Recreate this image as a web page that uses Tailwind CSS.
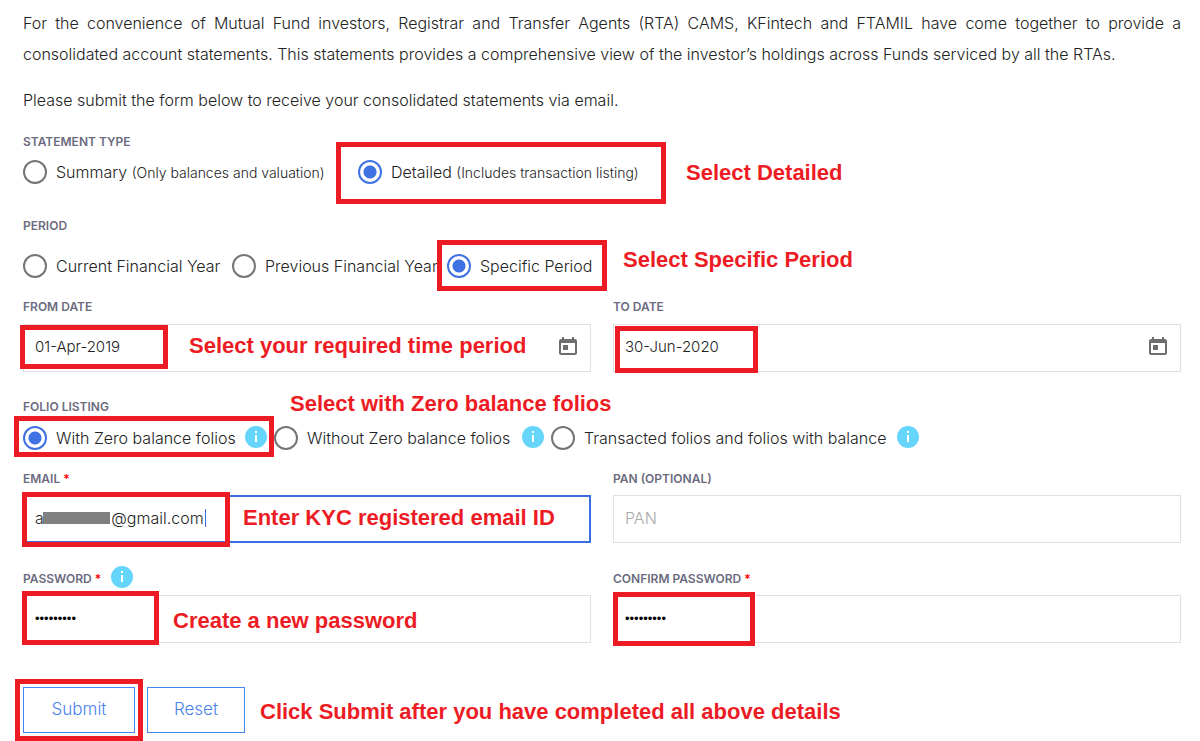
<!DOCTYPE html>
<html lang="en">
<head>
  <meta charset="UTF-8">
  <meta name="viewport" content="width=device-width, initial-scale=1.0">
  <title>Consolidated Account Statement</title>
  <script src="https://cdn.jsdelivr.net/npm/@tailwindcss/browser@4"></script>
</head>
<body class="bg-white font-['Inter',sans-serif] text-base font-light text-[#222222]">
  <main class="pt-2 pr-[19px] pb-2 pl-[23px]">
    <p class="mb-[15px] text-justify leading-[31px]">For the convenience of Mutual Fund investors, Registrar and Transfer Agents (RTA) CAMS, KFintech and FTAMIL have come together to provide a consolidated account statements. This statements provides a comprehensive view of the investor’s holdings across Funds serviced by all the RTAs.</p>
    <p class="mb-[18px] leading-[31px]">Please submit the form below to receive your consolidated statements via email.</p>

    <form>
      <!-- Statement type -->
      <fieldset>
        <legend class="mb-[10px] text-xs leading-4 font-semibold text-[#6b6b80]">STATEMENT TYPE</legend>
        <div class="flex">
          <label class="flex h-6 w-[335px] items-center gap-[9px] whitespace-nowrap">
            <input type="radio" name="type" class="size-6 shrink-0 appearance-none rounded-full border-2 border-[#757575] checked:border-[#3f73e3] checked:bg-[radial-gradient(circle,#3f73e3_6px,transparent_7px)]">
            <span>Summary <span class="text-sm">(Only balances and valuation)</span></span>
          </label>
          <label class="relative flex h-6 items-center gap-[9px] whitespace-nowrap">
            <input type="radio" name="type" checked class="size-6 shrink-0 appearance-none rounded-full border-2 border-[#757575] checked:border-[#3f73e3] checked:bg-[radial-gradient(circle,#3f73e3_6px,transparent_7px)]">
            <span>Detailed <span class="text-sm">(Includes transaction listing)</span></span>
            <span class="absolute -top-[18px] -left-[22px] h-[62px] w-[330px] border-5 border-[#ed1c24]"></span>
            <strong class="absolute top-px left-[328px] font-['Liberation_Sans',sans-serif] text-[22px] leading-6 font-bold text-[#ed1c24]">Select Detailed</strong>
          </label>
        </div>
      </fieldset>

      <!-- Period -->
      <fieldset class="mt-[34px]">
        <legend class="mb-5 text-xs leading-4 font-semibold text-[#6b6b80]">PERIOD</legend>
        <div class="flex">
          <label class="flex h-6 w-[209px] items-center gap-[9px] whitespace-nowrap">
            <input type="radio" name="period" class="size-6 shrink-0 appearance-none rounded-full border-2 border-[#757575] checked:border-[#3f73e3] checked:bg-[radial-gradient(circle,#3f73e3_6px,transparent_7px)]">
            Current Financial Year
          </label>
          <label class="flex h-6 w-[215px] items-center gap-[9px] whitespace-nowrap">
            <input type="radio" name="period" class="size-6 shrink-0 appearance-none rounded-full border-2 border-[#757575] checked:border-[#3f73e3] checked:bg-[radial-gradient(circle,#3f73e3_6px,transparent_7px)]">
            Previous Financial Year
          </label>
          <label class="relative flex h-6 items-center gap-[9px] whitespace-nowrap">
            <input type="radio" name="period" checked class="size-6 shrink-0 appearance-none rounded-full border-2 border-[#757575] checked:border-[#3f73e3] checked:bg-[radial-gradient(circle,#3f73e3_6px,transparent_7px)]">
            Specific Period
            <span class="absolute -top-[14px] -left-[10px] h-[51px] w-[170px] border-5 border-[#ed1c24]"></span>
            <strong class="absolute -top-[6px] left-[176px] font-['Liberation_Sans',sans-serif] text-[22px] leading-6 font-bold text-[#ed1c24]">Select Specific Period</strong>
          </label>
        </div>
      </fieldset>

      <!-- Dates -->
      <div class="mt-[21px] grid grid-cols-2 gap-x-[22px]">
        <div>
          <label for="from" class="mb-[9px] block text-xs leading-4 font-semibold text-[#6b6b80]">FROM DATE</label>
          <div class="relative flex h-12 items-center border border-[#e0e0e0]">
            <input type="text" id="from" value="01-Apr-2019" class="min-w-0 flex-1 pb-[2px] pl-[11px] text-[15px] leading-5 outline-none">
            <button type="button" aria-label="Pick from date" class="mr-3 mb-1">
              <svg class="size-5" viewBox="0 0 20 20" fill="#6e6e6e"><path fill-rule="evenodd" d="M4 1h2v2h8V1h2v2h1a2 2 0 0 1 2 2v12a2 2 0 0 1-2 2H3a2 2 0 0 1-2-2V5a2 2 0 0 1 2-2h1zM3 7v10h14V7z"/><path d="M5 9h5v5H5z"/></svg>
            </button>
            <span class="pointer-events-none absolute top-0 -left-1 h-11 w-[148px] border-5 border-[#ed1c24]"></span>
            <strong class="pointer-events-none absolute top-[9px] left-[165px] font-['Liberation_Sans',sans-serif] text-[22px] leading-6 font-bold text-[#ed1c24]">Select your required time period</strong>
          </div>
        </div>
        <div>
          <label for="to" class="mb-[9px] block text-xs leading-4 font-semibold text-[#6b6b80]">TO DATE</label>
          <div class="relative flex h-12 items-center border border-[#e0e0e0]">
            <input type="text" id="to" value="30-Jun-2020" class="min-w-0 flex-1 pb-[2px] pl-[11px] text-[15px] leading-5 outline-none">
            <button type="button" aria-label="Pick to date" class="mr-3 mb-1">
              <svg class="size-5" viewBox="0 0 20 20" fill="#6e6e6e"><path fill-rule="evenodd" d="M4 1h2v2h8V1h2v2h1a2 2 0 0 1 2 2v12a2 2 0 0 1-2 2H3a2 2 0 0 1-2-2V5a2 2 0 0 1 2-2h1zM3 7v10h14V7z"/><path d="M5 9h5v5H5z"/></svg>
            </button>
            <span class="pointer-events-none absolute top-px left-px h-[47px] w-[143px] border-5 border-[#ed1c24]"></span>
          </div>
        </div>
      </div>

      <!-- Folio listing -->
      <fieldset class="mt-[27px]">
        <legend class="mb-[11px] text-xs leading-4 font-semibold text-[#6b6b80]">FOLIO LISTING</legend>
        <div class="relative flex">
          <strong class="absolute -top-[34px] left-[267px] font-['Liberation_Sans',sans-serif] text-[22px] leading-6 font-bold text-[#ed1c24]">Select with Zero balance folios</strong>
          <label class="relative flex h-6 w-[251px] items-center gap-[9px] whitespace-nowrap">
            <input type="radio" name="folio" checked class="size-6 shrink-0 appearance-none rounded-full border-2 border-[#757575] checked:border-[#3f73e3] checked:bg-[radial-gradient(circle,#3f73e3_6px,transparent_7px)]">
            <span class="w-[180px]">With Zero balance folios</span>
            <svg class="mb-[2px] size-[22px] shrink-0" viewBox="0 0 22 22"><circle cx="11" cy="11" r="11" fill="#66d5fb"/><path d="M10 5h2v2h-2zM10 9h2v7h-2z" fill="#fff"/></svg>
            <span class="absolute -top-[10px] -left-[9px] h-[41px] w-[260px] border-5 border-[#ed1c24]"></span>
          </label>
          <label class="flex h-6 w-[277px] items-center gap-[9px] whitespace-nowrap">
            <input type="radio" name="folio" class="size-6 shrink-0 appearance-none rounded-full border-2 border-[#757575] checked:border-[#3f73e3] checked:bg-[radial-gradient(circle,#3f73e3_6px,transparent_7px)]">
            <span class="w-[206px]">Without Zero balance folios</span>
            <svg class="mb-[2px] size-[22px] shrink-0" viewBox="0 0 22 22"><circle cx="11" cy="11" r="11" fill="#66d5fb"/><path d="M10 5h2v2h-2zM10 9h2v7h-2z" fill="#fff"/></svg>
          </label>
          <label class="flex h-6 items-center gap-[9px] whitespace-nowrap">
            <input type="radio" name="folio" class="size-6 shrink-0 appearance-none rounded-full border-2 border-[#757575] checked:border-[#3f73e3] checked:bg-[radial-gradient(circle,#3f73e3_6px,transparent_7px)]">
            <span class="w-[304px]">Transacted folios and folios with balance</span>
            <svg class="mb-[2px] size-[22px] shrink-0" viewBox="0 0 22 22"><circle cx="11" cy="11" r="11" fill="#66d5fb"/><path d="M10 5h2v2h-2zM10 9h2v7h-2z" fill="#fff"/></svg>
          </label>
        </div>
      </fieldset>

      <!-- Email, PAN and passwords -->
      <div class="mt-[21px] grid grid-cols-2 gap-x-[22px] gap-y-7">
        <div>
          <label for="email" class="mb-2 block text-xs leading-4 font-semibold text-[#6b6b80]">EMAIL <span class="text-[#ff0000]">*</span></label>
          <div class="relative">
            <input type="text" inputmode="email" id="email" value="a&nbsp;&nbsp;&nbsp;&nbsp;&nbsp;&nbsp;&nbsp;&nbsp;&nbsp;&nbsp;&nbsp;&nbsp;&nbsp;&nbsp;&nbsp;@gmail.com" class="block h-12 w-full border-2 border-[#3b6fe0] pb-[2px] pl-[10px] leading-5 outline-none">
            <span class="absolute top-[17px] left-5 h-3 w-[67px] bg-[#808080]"></span>
            <span class="absolute top-[14px] left-[182px] h-[18px] w-px bg-[#3b6fe0]"></span>
            <span class="absolute -top-[3px] -left-px h-[55px] w-[208px] border-5 border-[#ed1c24]"></span>
            <strong class="pointer-events-none absolute top-[11px] left-[220px] font-['Liberation_Sans',sans-serif] text-[22px] leading-6 font-bold text-[#ed1c24]">Enter KYC registered email ID</strong>
          </div>
        </div>
        <div>
          <label for="pan" class="mb-2 block text-xs leading-4 font-semibold text-[#6b6b80]">PAN (OPTIONAL)</label>
          <input type="text" id="pan" placeholder="PAN" class="block h-12 w-full border border-[#e0e0e0] pb-[2px] pl-[11px] leading-5 outline-none placeholder:text-[#a9a9a9]">
        </div>
        <div>
          <div class="mb-2 flex h-4 items-center gap-[10px]">
            <label for="password" class="text-xs leading-4 font-semibold text-[#6b6b80]">PASSWORD <span class="text-[#ff0000]">*</span></label>
            <svg class="mb-1 size-[22px] shrink-0" viewBox="0 0 22 22"><circle cx="11" cy="11" r="11" fill="#66d5fb"/><path d="M10 5h2v2h-2zM10 9h2v7h-2z" fill="#fff"/></svg>
          </div>
          <div class="relative">
            <input type="password" id="password" value="123456789" class="block h-12 w-full border border-[#e0e0e0] pb-[2px] pl-[11px] font-['Liberation_Sans',sans-serif] text-[13px] font-normal text-black outline-none">
            <span class="pointer-events-none absolute -top-1 -left-px h-[54px] w-[137px] border-5 border-[#ed1c24]"></span>
            <strong class="pointer-events-none absolute top-[14px] left-[150px] font-['Liberation_Sans',sans-serif] text-[22px] leading-6 font-bold text-[#ed1c24]">Create a new password</strong>
          </div>
        </div>
        <div>
          <label for="confirm" class="mb-2 block text-xs leading-4 font-semibold text-[#6b6b80]">CONFIRM PASSWORD <span class="text-[#ff0000]">*</span></label>
          <div class="relative">
            <input type="password" id="confirm" value="123456789" class="block h-12 w-full border border-[#e0e0e0] pb-[2px] pl-[11px] font-['Liberation_Sans',sans-serif] text-[13px] font-normal text-black outline-none">
            <span class="pointer-events-none absolute -top-[3px] left-0 h-[54px] w-[142px] border-5 border-[#ed1c24]"></span>
          </div>
        </div>
      </div>

      <!-- Actions -->
      <div class="mt-11 flex items-center gap-3">
        <div class="relative">
          <button type="submit" class="block h-[46px] w-28 border border-[#4285f4] text-[17px] text-[#4a82ee]">Submit</button>
          <span class="pointer-events-none absolute -top-2 -left-2 h-[62px] w-32 border-5 border-[#ed1c24]"></span>
        </div>
        <button type="reset" class="h-[46px] w-[98px] border border-[#4285f4] text-[17px] text-[#4a82ee]">Reset</button>
        <strong class="mt-1 ml-[3px] font-['Liberation_Sans',sans-serif] text-[22px] leading-6 font-bold text-[#ed1c24]">Click Submit after you have completed all above details</strong>
      </div>
    </form>
  </main>
</body>
</html>
